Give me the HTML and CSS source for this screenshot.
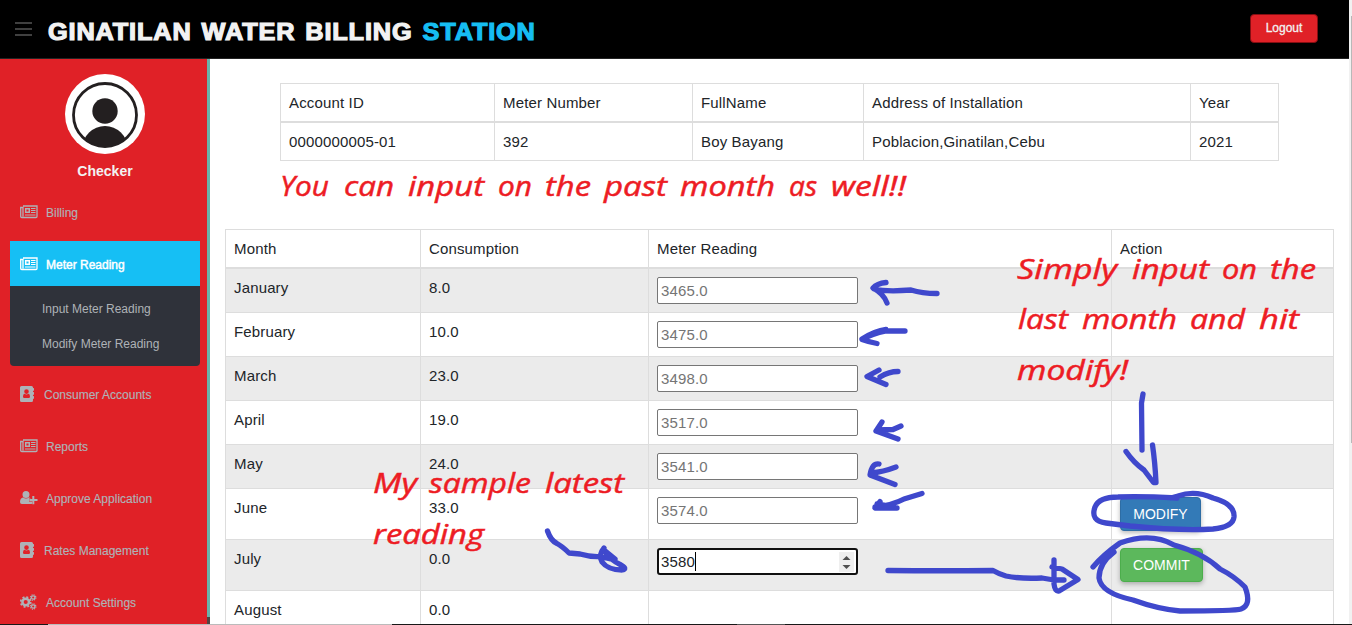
FILE: index.html
```html
<!DOCTYPE html>
<html lang="en">
<head>
<meta charset="utf-8">
<title>Ginatilan Water Billing Station</title>
<link rel="stylesheet" href="styles.css">
</head>
<body>
<svg class="defs" width="0" height="0">
  <symbol id="news" viewBox="0 0 18 14"><path d="M3 1h14v10.500a1 1 0 0 1-1 1H1.700a1 1 0 0 1-1-1V2.500H3v9" fill="none" stroke="currentColor" stroke-width="1.300"/><path d="M5.700 3.700h3.600v3.600H5.700z" fill="none" stroke="currentColor" stroke-width="1.500"/><path d="M11 3.500h4.500M11 5.500h4.500M11 7.500h4.500M5 10h10.500" stroke="currentColor" stroke-width="1.200"/></symbol>
  <symbol id="book" viewBox="0 0 14 16"><path fill="currentColor" fill-rule="evenodd" d="M1.500 0h10A1.500 1.500 0 0 1 13 1.500V2h.6q.4 0 .4.4v2q0 .4-.4.4H13V6h.6q.4 0 .4.400v2q0 .4-.4.400H13V10h.6q.4 0 .4.400v2q0 .4-.4.400H13v1.700A1.500 1.500 0 0 1 11.500 16h-10A1.500 1.500 0 0 1 0 14.500v-13A1.500 1.500 0 0 1 1.500 0zM6.500 3.300a2.300 2.300 0 1 0 0 4.600 2.300 2.300 0 0 0 0-4.600zM4.600 7.800Q3 8 3 10.500q0 1.600 1.200 1.600h4.600q1.200 0 1.200-1.600Q10 8 8.400 7.800q-1.900 1.200-3.800 0z"/></symbol>
  <symbol id="userplus" viewBox="0 0 18 14"><path fill="currentColor" d="M6 0a3.500 3.500 0 1 1 0 7 3.500 3.500 0 0 1 0-7zM3 6.500q3 2 6 0 1 .2 1.700 1H9v3h3v2.200q-.6.300-1.200.300H1.800Q0 13 0 11q0-4 3-4.500zM12.300 5h2v3h3.200v2h-3.200v3.200h-2V10H9.300V8h3z"/></symbol>
  <symbol id="cogs" viewBox="0 0 17 16"><g fill="none" stroke="currentColor"><circle cx="5.700" cy="8" r="3.300" stroke-width="2.500"/><circle cx="5.700" cy="8" r="5" stroke-width="1.700" stroke-dasharray="2 1.927"/><circle cx="13.200" cy="3.500" r="1.700" stroke-width="1.300"/><circle cx="13.200" cy="3.500" r="2.700" stroke-width="1.100" stroke-dasharray="1.200 .92"/><circle cx="13.200" cy="12.500" r="1.700" stroke-width="1.300"/><circle cx="13.200" cy="12.500" r="2.700" stroke-width="1.100" stroke-dasharray="1.200 .92"/></g></symbol>
</svg>

<header class="topbar">
  <div class="burger"><i></i><i></i><i></i></div>
  <h1 class="brand">GINATILAN WATER BILLING <span>STATION</span></h1>
  <a class="logout">Logout</a>
</header>

<div class="page">
  <aside class="sidebar">
    <svg class="avatar" width="80" height="80" viewBox="0 0 80 80"><circle cx="40" cy="40" r="40" fill="#fff"/><clipPath id="c"><circle cx="40" cy="41" r="32"/></clipPath><g clip-path="url(#c)" fill="#231f20"><circle cx="40" cy="37" r="12.700"/><ellipse cx="40" cy="74" rx="22.500" ry="22"/></g><circle cx="40" cy="41" r="31.500" fill="none" stroke="#231f20" stroke-width="2.800"/></svg>
    <h5 class="role">Checker</h5>
    <nav class="menu">
      <a class="item"><svg width="18" height="14"><use href="#news"/></svg><span>Billing</span></a>
      <a class="item active"><svg width="18" height="14"><use href="#news"/></svg><span>Meter Reading</span></a>
      <div class="submenu"><a>Input Meter Reading</a><a>Modify Meter Reading</a></div>
      <a class="item book"><svg width="14" height="16"><use href="#book"/></svg><span>Consumer Accounts</span></a>
      <a class="item"><svg width="18" height="14"><use href="#news"/></svg><span>Reports</span></a>
      <a class="item"><svg width="18" height="14"><use href="#userplus"/></svg><span>Approve Application</span></a>
      <a class="item book"><svg width="14" height="16"><use href="#book"/></svg><span>Rates Management</span></a>
      <a class="item cogs"><svg width="17" height="16"><use href="#cogs"/></svg><span>Account Settings</span></a>
    </nav>
  </aside>
  <div class="nice-rail"><i></i></div>

  <main class="content">
    <table class="grid account">
      <colgroup><col class="a1"><col class="a2"><col class="a3"><col class="a4"><col class="a5"></colgroup>
      <tr class="head"><td>Account ID</td><td>Meter Number</td><td>FullName</td><td>Address of Installation</td><td>Year</td></tr>
      <tr><td>0000000005-01</td><td>392</td><td>Boy Bayang</td><td>Poblacion,Ginatilan,Cebu</td><td>2021</td></tr>
    </table>
    <table class="grid months">
      <colgroup><col class="m1"><col class="m2"><col class="m3"><col class="m4"></colgroup>
      <tr class="head"><td>Month</td><td>Consumption</td><td>Meter Reading</td><td>Action</td></tr>
      <tr class="odd"><td>January</td><td>8.0</td><td><div class="field">3465.0</div></td><td></td></tr>
      <tr><td>February</td><td>10.0</td><td><div class="field">3475.0</div></td><td></td></tr>
      <tr class="odd"><td>March</td><td>23.0</td><td><div class="field">3498.0</div></td><td></td></tr>
      <tr><td>April</td><td>19.0</td><td><div class="field">3517.0</div></td><td></td></tr>
      <tr class="odd"><td>May</td><td>24.0</td><td><div class="field">3541.0</div></td><td></td></tr>
      <tr class="tall"><td>June</td><td>33.0</td><td><div class="field">3574.0</div></td><td><div class="btn modify">MODIFY</div></td></tr>
      <tr class="tall odd"><td>July</td><td>0.0</td><td><div class="field focus"><span class="typed">3580</span><svg class="spin" width="15" height="20" viewBox="0 0 15 20"><path fill="#efefef" d="M0 0h15v20H0z"/><path fill="#505050" d="M7.500 4l4 4h-8zM7.500 17l4-4h-8z"/></svg></div></td><td><div class="btn commit">COMMIT</div></td></tr>
      <tr class="tall"><td>August</td><td>0.0</td><td></td><td></td></tr>
    </table>
  </main>
  <div class="scroll"><i></i></div>
</div>

<div class="bottomline"><i class="b1"></i><i class="b2"></i><i class="b3"></i><i class="b4"></i></div>

<svg class="notes" width="1352" height="625" viewBox="0 0 1352 625">
  <g class="hand">
    <text x="280" y="196" textLength="49" lengthAdjust="spacingAndGlyphs">You</text><text x="344" y="196" textLength="50" lengthAdjust="spacingAndGlyphs">can</text><text x="408" y="196" textLength="76" lengthAdjust="spacingAndGlyphs">input</text><text x="498" y="196" textLength="34" lengthAdjust="spacingAndGlyphs">on</text><text x="545" y="196" textLength="46" lengthAdjust="spacingAndGlyphs">the</text><text x="604" y="196" textLength="63" lengthAdjust="spacingAndGlyphs">past</text><text x="680" y="196" textLength="95" lengthAdjust="spacingAndGlyphs">month</text><text x="789" y="196" textLength="28" lengthAdjust="spacingAndGlyphs">as</text><text x="831" y="196" textLength="75" lengthAdjust="spacingAndGlyphs">well!!</text>
    <text x="1017" y="279" textLength="100" lengthAdjust="spacingAndGlyphs">Simply</text><text x="1132" y="279" textLength="77" lengthAdjust="spacingAndGlyphs">input</text><text x="1222" y="279" textLength="35" lengthAdjust="spacingAndGlyphs">on</text><text x="1270" y="279" textLength="46" lengthAdjust="spacingAndGlyphs">the</text>
    <text x="1018" y="329" textLength="50" lengthAdjust="spacingAndGlyphs">last</text><text x="1082" y="329" textLength="95" lengthAdjust="spacingAndGlyphs">month</text><text x="1190" y="329" textLength="55" lengthAdjust="spacingAndGlyphs">and</text><text x="1259" y="329" textLength="40" lengthAdjust="spacingAndGlyphs">hit</text>
    <text x="1017" y="380" textLength="111" lengthAdjust="spacingAndGlyphs">modify!</text>
    <text x="373" y="493" textLength="44" lengthAdjust="spacingAndGlyphs">My</text><text x="429" y="493" textLength="102" lengthAdjust="spacingAndGlyphs">sample</text><text x="545" y="493" textLength="79" lengthAdjust="spacingAndGlyphs">latest</text>
    <text x="373" y="544" textLength="111" lengthAdjust="spacingAndGlyphs">reading</text>
  </g>
  <g class="ink">
    <path d="M886 282.500Q877 283.500 873 288Q884 294 887 303M874 289Q886 292 911 290Q922 293.500 937 293.500"/>
    <path d="M905 331H886Q872 334 862 339.500Q869 342 877 343.500M862 339Q875 331 886 329.500"/>
    <path d="M879 370L867 376.500L886 384.500M880 377Q889 371.500 898 371.500"/>
    <path d="M882 422L876 431L898 439M877 430L893 429.500L901 426"/>
    <path d="M879 464Q872 463 870 475L895 484.500M871 473Q883 472 896 467"/>
    <path d="M880 501.500L875 508H897M875 507Q893 505 904 499L922 493.500M877 504L884 505"/>
    <path d="M547.500 531Q551 541 557 543.500Q562 546 569 553L580 554Q590 557 600 556.500L615 560M604 548Q598 555 602 562Q608 570 622 570Q628 569 621 565Q610 560 604 550L615 559"/>
    <path d="M888 570.500Q940 571 993 570.500Q999 574 1006 576Q1020 579 1042 578L1054 580H1064M1054 560V584Q1055 592 1059 591L1078 579.500Q1068 573 1062 569L1052 567"/>
    <path d="M1143 394L1141.500 403L1142 450M1126 451.500Q1134 463 1144 470L1153.500 482.500H1156Q1155 462 1152.500 445"/>
    <path d="M1177 498Q1140 496 1118 497Q1099 497 1095 507Q1090 521 1106 523L1130 526Q1180 531 1213 529Q1233 527 1234 517Q1235 504 1213 498Q1195 490 1178 496L1171 498"/>
    <path d="M1093 567Q1103 555 1120 543Q1151 532 1174 545Q1203 553 1220 569Q1234 576 1245 587Q1252 605 1241 609Q1235 611 1180 611Q1158 609 1133 600Q1101 593 1099 578Q1099 563 1114 552"/>
  </g>
</svg>
</body>
</html>
```
FILE: styles.css
```css
* { box-sizing: border-box; }
html, body { margin: 0; height: 625px; overflow: hidden; }
body { position: relative; background: #fff; color: #212529; font: 15px/22px "Liberation Sans", Arial, sans-serif; letter-spacing: .15px; }
i { display: block; }
.defs { position: absolute; }

.topbar { display: flex; align-items: flex-start; width: 1349px; height: 59px; padding: 0 31px 0 15px; background: #000; border-bottom: 1px solid #232323; }
.burger { display: grid; gap: 4px; width: 17px; margin: 22px 16px 0 0; }
.burger i { height: 2px; background: #404040; }
.brand { flex: 1; margin: 17px 0 0; font: bold 24px/30px "Liberation Sans", Arial, sans-serif; letter-spacing: .8px; word-spacing: 2px; color: #f2f2f2; white-space: nowrap; -webkit-text-stroke: 1.200px currentColor; transform: scaleX(1.055); transform-origin: left; }
.brand span { color: #16bdf2; }
.logout { margin-top: 14px; width: 68px; height: 29px; border: 1px solid #850e12; border-radius: 4px; background: #e02127; color: #f2f2f2; font-size: 12px; line-height: 26px; text-align: center; letter-spacing: 0; -webkit-text-stroke: .3px #f2f2f2; }

.page { display: flex; height: 566px; }
.sidebar { flex: none; width: 207px; padding-top: 15px; background: #e02127; }
.avatar { display: block; margin-left: 65px; }
.role { margin: 8px 0 0; padding-left: 3px; text-align: center; font: bold 14px/18px "Liberation Sans", sans-serif; letter-spacing: 0; color: #f2f2f2; }
.menu { display: flex; flex-direction: column; width: 190px; margin: 9px 0 0 10px; font-size: 12px; letter-spacing: 0; color: #aeb2b7; }
.item { display: flex; flex: none; align-items: center; gap: 8px; height: 45px; margin-bottom: 7px; padding-left: 10px; }
.item span { padding-top: 2px; -webkit-text-stroke: .15px currentColor; }
.item.book { gap: 10px; }
.item.cogs { gap: 9px; }
.active { margin-bottom: 0; background: #16bff4; color: #fff; }
.active span { -webkit-text-stroke-width: .45px; }
.submenu { display: flex; flex-direction: column; height: 80px; margin-bottom: 5px; padding: 6px 0 0 32px; border-radius: 0 0 4px 4px; background: #2f323a; line-height: 35px; }
.nice-rail { width: 3px; background: #69b3aa; }
.nice-rail i { height: 8px; margin-top: 558px; background: #514543; }

.content { flex: none; width: 1139px; padding: 24px 0 0 15px; }
.grid { border-collapse: separate; border-spacing: 0; table-layout: fixed; border-left: 1px solid #ddd; border-top: 1px solid #ddd; }
.grid td { padding: 8px 8px 0; vertical-align: top; border-right: 1px solid #ddd; border-bottom: 1px solid #ddd; }
.grid .head td { height: 39px; border-bottom-width: 2px; }
.account { width: 999px; margin-left: 55px; }
.account td { height: 38px; }
.a1 { width: 214px; } .a2 { width: 198px; } .a3 { width: 171px; } .a4 { width: 327px; } .a5 { width: 88px; }
.months { width: 1109px; margin-top: 68px; }
.months td { height: 44px; }
.months .tall td { height: 51px; }
.m1 { width: 195px; } .m2 { width: 228px; } .m3 { width: 463px; } .m4 { width: 222px; }
.odd { background: #ebebeb; }
.field { width: 201px; height: 27px; padding: 2px 3px 0; border: 1px solid #767676; border-radius: 2px; background: #fff; color: #757575; }
.focus { display: flex; justify-content: space-between; padding: 1px 2px 0; border: 2px solid #101010; border-radius: 3px; color: #212529; }
.typed { height: 19px; margin-top: 1px; line-height: 19px; border-right: 1px solid #000; }
.spin { margin-top: 1px; }
.btn { height: 34px; border: 1px solid; border-radius: 4px; color: #fff; font-size: 14px; line-height: 32px; text-align: center; letter-spacing: 0; box-shadow: 0 2px 5px rgba(0,0,0,.28); }
.modify { width: 81px; background: #337ab7; border-color: #2e6da4; }
.commit { width: 83px; background: #5cb85c; border-color: #4cae4c; }

.scroll { width: 3px; height: 625px; margin-top: -59px; padding: 16px 0 0 2px; background: #f1f1f1; }
.scroll i { height: 427px; background: #b8b8b8; }
.bottomline { position: absolute; left: 0; top: 624px; display: flex; width: 1352px; height: 1px; background: #181818; }
.b1 { width: 48px; } .b2 { width: 344px; background: #bbb; } .b3 { width: 345px; } .b4 { width: 48px; background: #555; }

.notes { position: absolute; left: 0; top: 0; }
.hand { fill: #ed1c24; stroke: #ed1c24; stroke-width: .5; font: italic 400 28px "Open Sans", "Noto Sans", sans-serif; letter-spacing: 0; }
.ink { fill: none; stroke: #3f48cc; stroke-width: 5.300; stroke-linecap: round; stroke-linejoin: round; }
```
